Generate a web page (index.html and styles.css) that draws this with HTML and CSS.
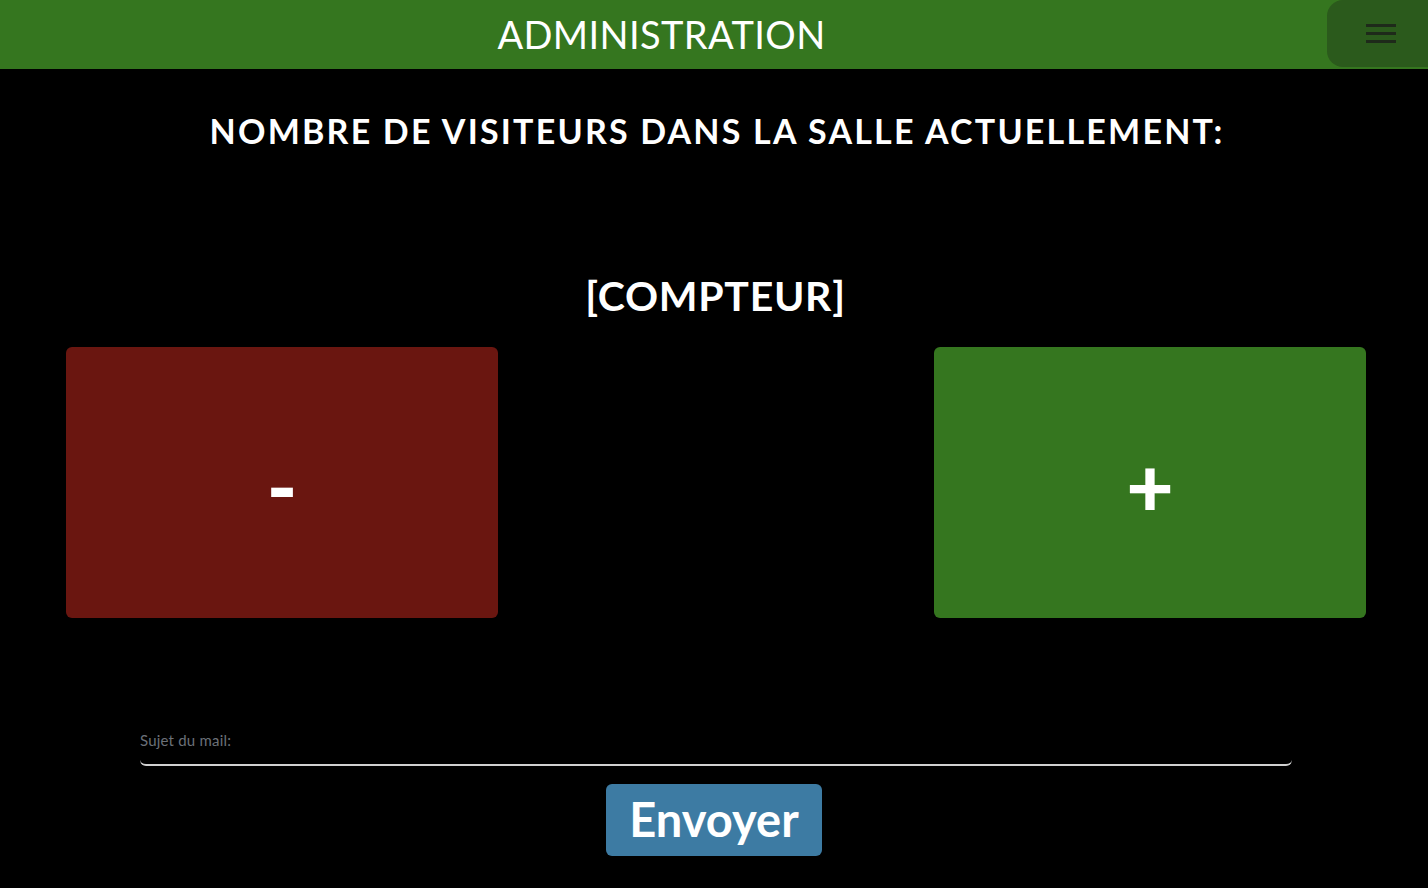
FILE: index.html
```html
<!DOCTYPE html>
<html lang="fr">
<head>
<meta charset="utf-8">
<title>Administration</title>
<link rel="stylesheet" href="styles.css">
</head>
<body>
<header class="topbar">
  <h1 class="topbar-title">ADMINISTRATION</h1>
  <button class="menu-btn" aria-label="Menu">
    <svg width="30" height="19" viewBox="0 0 30 19"><rect x="0" y="0" width="30" height="3" fill="#1e2a1a"/><rect x="0" y="8" width="30" height="3" fill="#1e2a1a"/><rect x="0" y="16" width="30" height="3" fill="#1e2a1a"/></svg>
  </button>
</header>
<main class="content">
  <h2 class="visitors-title">NOMBRE DE VISITEURS DANS LA SALLE ACTUELLEMENT:</h2>
  <div class="counter">[COMPTEUR]</div>
  <div class="controls">
    <button class="ctrl ctrl-minus">-</button>
    <button class="ctrl ctrl-plus">+</button>
  </div>
  <form class="mail-form">
    <label class="field">
      <span class="field-label">Sujet du mail:</span>
      <input class="field-input" type="text">
    </label>
    <button type="button" class="send-btn">Envoyer</button>
  </form>
</main>
</body>
</html>
```
FILE: styles.css
```css
* { box-sizing: border-box; }
html, body { margin: 0; padding: 0; }
body {
  background: #000;
  color: #fff;
  font-family: "Lato", "Open Sans", sans-serif;
  height: 888px;
  overflow: hidden;
}
.topbar {
  display: flex;
  align-items: flex-start;
  background: #35761f;
  height: 69px;
}
.topbar-title {
  flex: 1;
  margin: 0;
  text-align: center;
  font-weight: 400;
  font-size: 38px;
  letter-spacing: 0.4px;
  line-height: 68px;
  padding-right: 4px;
}
.menu-btn {
  width: 101px;
  height: 67px;
  border: none;
  background: #2b5a1c;
  border-radius: 16px 0 0 16px;
  display: flex;
  align-items: center;
  justify-content: center;
  padding: 0 0 0 7px;
}
.menu-btn svg { display: block; }
.content {
  display: flex;
  flex-direction: column;
  align-items: center;
}
.visitors-title {
  margin: 40px 0 0;
  padding-left: 6px;
  font-size: 34px;
  font-weight: 700;
  letter-spacing: 2.2px;
  line-height: 44px;
}
.counter {
  margin-top: 118px;
  padding-left: 3px;
  font-size: 41px;
  font-weight: 700;
  letter-spacing: 0.7px;
  line-height: 50px;
}
.controls {
  align-self: stretch;
  margin-top: 26px;
  padding: 0 62px 0 66px;
  display: flex;
  justify-content: space-between;
}
.ctrl {
  width: 432px;
  height: 271px;
  border: none;
  border-radius: 6px;
  color: #fff;
  font-family: inherit;
  font-weight: 900;
  font-size: 82px;
  line-height: 1;
  padding: 4px 0 0;
}
.ctrl-minus { background: #6a1610; }
.ctrl-plus { background: #35761f; }
.mail-form {
  align-self: stretch;
  margin-top: 113px;
  padding: 0 136px 0 140px;
  display: flex;
  flex-direction: column;
  align-items: center;
}
.field {
  width: 100%;
  display: flex;
  flex-direction: column;
}
.field-label {
  color: #6b7078;
  font-size: 15px;
  line-height: 18px;
  letter-spacing: 0.2px;
}
.field-input {
  background: transparent;
  border: none;
  border-bottom: 2px solid #d0d0d0;
  border-radius: 0 0 6px 6px;
  height: 17px;
  padding: 0;
  outline: none;
  color: #fff;
}
.send-btn {
  margin-top: 18px;
  margin-right: 4px;
  width: 216px;
  height: 72px;
  background: #3d7ba3;
  border: none;
  border-radius: 6px;
  color: #fff;
  font-family: inherit;
  font-weight: 700;
  font-size: 47px;
  padding: 0 0 2px;
}
```
